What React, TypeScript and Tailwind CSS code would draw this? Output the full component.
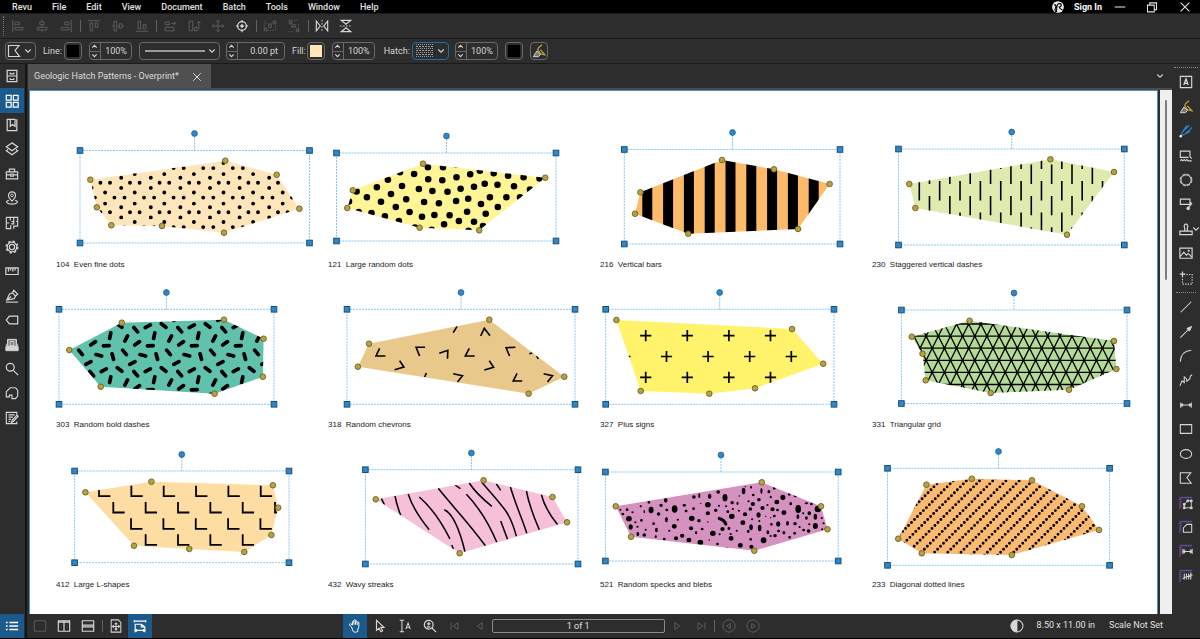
import { useId } from "react";
import type { ReactNode } from "react";

type Pt = [number, number];

/* ------------------------------------------------------------------ */
/* Icons, all on a 16 x 16 grid                                        */
/* ------------------------------------------------------------------ */

const icons: Record<string, ReactNode> = {
  // arrange toolbar
  alignLeft: <path d="M2 1v14M4.500 3.500h5v3h-5zM4.500 9.500h9v3h-9z" />,
  alignCenter: <path d="M8 1v2.500M8 6.500v3M8 12.500v2.500M5.500 3.500h5v3h-5zM2.500 9.500h11v3h-11z" />,
  alignRight: <path d="M14 1v14M6.500 3.500h5v3h-5zM2.500 9.500h9v3h-9z" />,
  alignTop: <path d="M1 2h14M3.500 4.500h3v9h-3zM9.500 4.500h3v5h-3z" />,
  alignMiddle: <path d="M1 8h2.500M6.500 8h3M12.500 8h2.500M3.500 2.500h3v11h-3zM9.500 5.500h3v5h-3z" />,
  alignBottom: <path d="M1 14h14M3.500 2.500h3v9h-3zM9.500 6.500h3v5h-3z" />,
  sameWidth: <path d="M2.500 9.500h10v4h-10zM2.500 3.500h5v3h-5zM9.500 5h5M12.500 3l2 2-2 2" />,
  sameHeight: <path d="M2.500 2.500h4v11h-4zM8.500 9.500h3v4h-3zM13.500 12V3M11.500 5l2-2 2 2" />,
  move: <path d="M8 1.500v13M1.500 8h13M6 3.500l2-2 2 2M6 12.500l2 2 2-2M3.500 6l-2 2 2 2M12.500 6l2 2-2 2" />,
  target: (
    <>
      <circle cx="8" cy="8" r="5" strokeWidth="1.500" />
      <circle cx="8" cy="8" r="1.500" fill="currentColor" />
      <path d="M8 1v3M8 12v3M1 8h3M12 8h3" strokeWidth="1.300" />
    </>
  ),
  distH: (
    <>
      <path d="M1.500 2v12M14.500 2v12" strokeDasharray="1.500 1.500" />
      <path d="M5 13h8M3 5h7" strokeDasharray="1.500 1.500" />
      <path d="M11.500 2.500h3v3h-3zM6.500 6.500h3v3h-3zM1.500 10.500h3v3h-3z" />
    </>
  ),
  distV: (
    <>
      <path d="M2 1.500h12M13 6v8M5 5v6M2 14.500h6" strokeDasharray="1.500 1.500" />
      <path d="M2.500 2.500h3v3h-3zM6.500 6.500h3v3h-3zM10.500 11.500h3v3h-3z" />
    </>
  ),
  flipH: (
    <>
      <path d="M8 1v14" strokeDasharray="2 1.500" />
      <path d="M1.500 2.500v11l4.500-5.500zM14.500 2.500v11l-4.500-5.500z" strokeWidth="1.300" />
    </>
  ),
  flipV: (
    <>
      <path d="M1 8h14" strokeDasharray="2 1.500" />
      <path d="M2.500 1.500h11l-5.500 4.500zM2.500 14.500h11l-5.500-4.500z" strokeWidth="1.300" />
    </>
  ),
  // panels
  cabinet: <path d="M2.500 1.500h11v13h-11zM2.500 8h11M6 4v1.500h4V4M6 10.500V12h4v-1.500" strokeWidth="1.400" />,
  grid: <path d="M1.500 1.500h5.500v5.500h-5.500zM9.500 1.500h5.500v5.500h-5.500zM1.500 9.500h5.500v5.500h-5.500zM9.500 9.500h5.500v5.500h-5.500z" strokeWidth="1.400" />,
  bookmark: <path d="M6 1.500H2.500v13h11v-13M6 1.500h5.500v8L8.700 7.500 6 9.500z" strokeWidth="1.400" />,
  layers: <path d="M8 1l6.500 4.500L8 10 1.500 5.500zM3.500 8.500l-2 1.500L8 14.500l6.500-4.500-2-1.500" strokeWidth="1.400" />,
  toolbox: <path d="M1.500 5.500h13v8h-13zM1.500 9h5M9.500 9h5M6.500 8h3v2.500h-3zM5 5.500v-3h6v3" strokeWidth="1.300" />,
  pin: (
    <>
      <path d="M8 11.500C5 8.500 4 7 4 5a4 4 0 0 1 8 0c0 2-1 3.500-4 6.500z" strokeWidth="1.300" />
      <path d="M4.500 10.500C-.500 12 2 15 8 15s8.500-3 3.500-4.500" strokeWidth="1.300" />
      <circle cx="8" cy="5" r="1.500" />
    </>
  ),
  floor: <path d="M1.500 1.500h13v10H10v3M1.500 1.500v13h5v-4M6 1.500V5M1.500 8H5M10 1.500v5H7.500M10 6.500V9H7M14.500 6h-2" strokeWidth="1.300" />,
  gear: (
    <>
      <circle cx="8" cy="8" r="5.500" strokeWidth="1.400" />
      <circle cx="8" cy="8" r="3" strokeWidth="1.300" />
      <circle cx="8" cy="8" r="6.700" strokeWidth="1.500" strokeDasharray="2.600 2.660" />
    </>
  ),
  ruler: <path d="M1 4.500h14v7.500H1zM4 4.500v4M6.500 4.500v3M9 4.500v4M11.500 4.500v3" strokeWidth="1.400" />,
  signature: (
    <>
      <path d="M1 15h14" strokeWidth="1.300" />
      <path d="M2 12.500l3-6.500 3.500-1.500 3.500 3.500-1.500 3zM8.500 4.500l1.500-3 4.500 4.500-2.500 2M2 12.500l5-4" strokeWidth="1.300" />
    </>
  ),
  tag: <path d="M5 3.500h9.500v9H5L1.500 8z" strokeWidth="1.400" />,
  studio: (
    <>
      <path d="M3 1.500h10v8H3z" />
      <path d="M1 10h14v4.500H1z" fill="currentColor" />
      <path d="M3 2h10v7.500H3z" fill="currentColor" fillOpacity=".5" />
      <path d="M6 4h4v4.500H6z" />
      <path d="M1.500 6.500V14M14.500 6.500V14" />
    </>
  ),
  search: (
    <>
      <circle cx="6" cy="6" r="4.500" strokeWidth="1.400" />
      <path d="M9.500 9.500l5.500 5.500" strokeWidth="1.400" />
    </>
  ),
  shape: <path d="M1.500 6.500L6 2h6l2.500 3v6.500L12 14.500H8v-4H5v2H1.500z" strokeWidth="1.300" />,
  notes: <path d="M13.500 4v-2.500h-12v13h12V12M4 4.500h7M4 7h5M4 9.500h3M4 12h2M15 6l-5.500 6-2 1 .700-2.300 5.500-6z" strokeWidth="1.300" />,
  // markup tools
  text: (
    <>
      <path d="M1.500 1.500h13v13h-13z" strokeWidth="1.300" />
      <path d="M5.500 11.500L8 4.500l2.500 7M6.500 9.500h3" strokeWidth="1.500" />
    </>
  ),
  highlighter: (
    <>
      <path d="M11.500 1C9 2.500 7 4 6.500 6.500l3 4.500 5.500 1.500-5.500-6" stroke="#b89b35" strokeWidth="1.500" />
      <path d="M5.500 8l-4 6.500h6l2-2.500z" fill="#777" stroke="#e4e4e4" />
    </>
  ),
  pen: (
    <>
      <path d="M12 1.500L4 9l-2 4.500L7 11.500 15 4M9 1.500L4 9M7 11.500l6-3" stroke="#2f80c2" strokeWidth="1.400" />
      <circle cx="2" cy="14" r="1.400" fill="#fff" stroke="none" />
    </>
  ),
  typewriter: <path d="M12.500 8V2.500h-11v7H11M1.500 13.500l1.500-1.500 1.500 1.500L6 12l1.500 1.500L9 12l1.500 1.500h4M12 8l2.500 3" strokeWidth="1.300" />,
  cloud: (
    <>
      <circle cx="8" cy="8" r="5.800" strokeWidth="1.100" />
      <circle cx="8" cy="8" r="6.700" strokeWidth="1.100" strokeDasharray="3.800 1.460" />
    </>
  ),
  callout: (
    <>
      <path d="M1.500 2.500h11v6h-11zM12.500 5.500l2 2-4 5" strokeWidth="1.300" />
      <circle cx="10.500" cy="13" r="1.600" fill="currentColor" />
    </>
  ),
  stamp: <path d="M1 14.500h14v-4H1zM6.500 10.500V7C3.500 1 12.500 1 9.500 7v3.500" strokeWidth="1.400" />,
  image: (
    <>
      <path d="M1 2.500h14v11.500H1zM1.500 12l4-5 3 3.500 2-2 4 4" strokeWidth="1.300" />
      <circle cx="11" cy="5.500" r=".8" fill="currentColor" />
    </>
  ),
  crop: (
    <>
      <path d="M4 6v9h11V4H6" strokeDasharray="1.500 1.500" strokeWidth="1.200" />
      <path d="M4 .500v6M1 3.500h6" strokeWidth="1.300" />
    </>
  ),
  line: <path d="M2 14L14 2" strokeWidth="1.200" />,
  arrow: (
    <>
      <path d="M1.500 14.500L12 4" strokeWidth="1.200" />
      <path d="M14.500 1.500L9 4l3 3z" fill="currentColor" />
    </>
  ),
  arc: <path d="M1.500 14.500C2 6 6 2 14 1.500" strokeWidth="1.200" />,
  polyline: <path d="M1 14.500L3.500 9l2.500 2V4.500l2.500 2L9 9.500l3.500-3 .5-3 2-1.500" strokeWidth="1.200" />,
  dimension: <path d="M2 5v6M14 5v6M2 8h12M4.500 6.500L2 8l2.500 1.500M11.500 6.500L14 8l-2.500 1.500" strokeWidth="1.300" />,
  rect: <path d="M1.500 3h13v10h-13z" strokeWidth="1.200" />,
  ellipse: <ellipse cx="8" cy="8" rx="6.500" ry="5" strokeWidth="1.200" />,
  polygon: <path d="M1.500 2h12L9 7.500l5 6.500H1.500z" strokeWidth="1.200" />,
  measPoly: (
    <>
      <path d="M1 15V1.500h14M3.500 1v2M6 1v2M8.500 1v2M11 1v2M13.500 1v2M1 4h2M1 6.500h2M1 9h2M1 11.500h2" stroke="#7450ae" />
      <path d="M6 13.500V9.500l4-4h4v8z" />
      <path d="M5 12.500h2v2H5zM5 8.500h2v2H5zM9 4.500h2v2H9zM13 4.500h2v2h-2zM13 12.500h2v2h-2z" fill="currentColor" />
    </>
  ),
  measArea: (
    <>
      <path d="M1 15V1.500h14M3.500 1v2M6 1v2M8.500 1v2M11 1v2M13.500 1v2M1 4h2M1 6.500h2M1 9h2M1 11.500h2" stroke="#7450ae" />
      <path d="M5 14V9l4-4h5.500v9z" strokeWidth="1.200" />
    </>
  ),
  measLen: (
    <>
      <path d="M1 15V1.500h14M3.500 1v2M6 1v2M8.500 1v2M11 1v2M13.500 1v2M1 4h2M1 6.500h2M1 9h2M1 11.500h2" stroke="#7450ae" />
      <path d="M4.500 5.500v6M15 5.500v6M5 8.500h10M7 6.500l-2 2 2 2M12.500 6.500l2 2-2 2" strokeWidth="1.200" />
    </>
  ),
  measCount: (
    <>
      <path d="M1 15V1.500h14M3.500 1v2M6 1v2M8.500 1v2M11 1v2M13.500 1v2M1 4h2M1 6.500h2M1 9h2M1 11.500h2" stroke="#7450ae" />
      <path d="M6 5v7M8.500 5v7M11 5v7M13.500 4v8M4 10.500L15.500 6.500" strokeWidth="1.200" />
    </>
  ),
  // status bar
  list: <path d="M1 4h2M5 4h10M1 8h2M5 8h10M1 12h2M5 12h10" strokeWidth="1.800" />,
  paneOne: <path d="M1.500 2h13v12h-13z" />,
  paneTwo: <path d="M1.500 2h13v12h-13zM8 2v12M1.500 3.500h13" strokeWidth="1.300" />,
  paneRows: <path d="M1.500 2h13v12h-13zM1.500 7h13M1.500 9h13" strokeWidth="1.300" />,
  fitPage: <path d="M2.500 1h8l3 3v11h-11zM8 4.500v8M4 8.500h8M6.500 6L8 4.500 9.500 6M6.500 11L8 12.500 9.500 11M5.500 7L4 8.500 5.500 10M10.500 7L12 8.500 10.500 10" strokeWidth="1.200" />,
  fitWidth: <path d="M1.500 1v3M14.500 1v3M1.500 2.500h13M2.500 15V6h7l4 3v6M9.500 6v3h4M1.500 13h13M4.500 11.500L3 13l1.500 1.500M11.500 11.500L13 13l-1.500 1.500" strokeWidth="1.300" />,
  hand: <path d="M4 9L2 7c-1-1.500 1-2 2-1l1 1V3c.5-1 1.500-1 1.800 0V1.500c.5-1 1.500-1 1.800 0V3c.5-1 1.500-1 1.800 0v1c.6-1 1.700-1 1.900 0 .5 3 0 6-1 7.500V14c-2 1.500-4.500 1.500-5.500 0zM6.800 3v3.500M8.600 3v3.500M10.500 4v3" strokeWidth="1.100" />,
  pointer: <path d="M4 1.500v11.500l3-2.500 2 4 2-1-2-4h3.500z" strokeWidth="1.300" />,
  selectText: <path d="M2 1.500h5M4.500 1.500v13M2 14.500h5M9 11.500l2.500-7 2.500 7M10 9.500h3" strokeWidth="1.200" />,
  zoom: (
    <>
      <circle cx="6.500" cy="6.500" r="5" strokeWidth="1.400" />
      <path d="M10 10l5 5M4.500 5.500h4M6.500 3.500v4M4.500 9h4" strokeWidth="1.300" />
    </>
  ),
  first: <path d="M3.500 4v8M11.500 4v8L6 8z" />,
  prev: <path d="M10.500 4v8L5 8z" />,
  next: <path d="M5.500 4v8L11 8z" />,
  last: <path d="M12.500 4v8M4.500 4v8L10 8z" />,
  prevView: (
    <>
      <circle cx="8" cy="8" r="7" />
      <path d="M9.500 5v6L5.500 8z" />
    </>
  ),
  nextView: (
    <>
      <circle cx="8" cy="8" r="7" />
      <path d="M6.500 5v6l4-3z" />
    </>
  ),
  contrast: (
    <>
      <circle cx="8" cy="8" r="6.800" strokeWidth="1.200" />
      <path d="M8 1.200a6.800 6.800 0 0 0 0 13.600z" fill="currentColor" />
    </>
  ),
  close: <path d="M3 3l10 10M13 3L3 13" strokeWidth="1.300" />,
  minimize: <path d="M1 8h14" strokeWidth="1.400" />,
  restore: <path d="M2 5.500h9v9H2zM5 5.500V2.500h9v9h-3" strokeWidth="1.400" />,
  chevron: <path d="M2.500 5l5.500 5.500L13.500 5" strokeWidth="2.200" />,
  chevronUp: <path d="M3 10.500l5-5 5 5" strokeWidth="2.600" />,
  chevronDown: <path d="M3 5.500l5 5 5-5" strokeWidth="2.600" />,
};

function Icon({ name, className = "size-3.5" }: { name: string; className?: string }) {
  return (
    <svg viewBox="0 0 16 16" fill="none" stroke="currentColor" className={`${className} shrink-0`} aria-hidden="true">
      {icons[name]}
    </svg>
  );
}

function Tool({
  name,
  label,
  active = false,
  disabled = false,
}: {
  name: string;
  label: string;
  active?: boolean;
  disabled?: boolean;
}) {
  const tone = active ? "bg-[#1b5a8a] text-white" : disabled ? "text-[#626262]" : "text-[#d6d6d6]";
  return (
    <button
      type="button"
      aria-label={label}
      aria-pressed={active}
      disabled={disabled}
      className={`flex h-full min-h-6 w-6 shrink-0 items-center justify-center ${tone}`}
    >
      <Icon name={name} />
    </button>
  );
}

function Separator() {
  return (
    <div className="flex w-1 shrink-0 justify-center">
      <div className="h-3 w-px bg-[#626262]" />
    </div>
  );
}

/* ------------------------------------------------------------------ */
/* Menu bar and property toolbars                                      */
/* ------------------------------------------------------------------ */

const menus = ["Revu", "File", "Edit", "View", "Document", "Batch", "Tools", "Window", "Help"];

function MenuBar() {
  return (
    <header className="flex h-[13px] items-center bg-black pt-px text-[9px] leading-3 font-medium text-[#e2e2e2]">
      <nav className="flex gap-5 pl-3">
        {menus.map((m) => (
          <button key={m} type="button">
            {m}
          </button>
        ))}
      </nav>
      <div className="ml-auto flex items-center pr-2">
        <svg viewBox="0 0 16 16" className="mr-2.5 size-3" aria-hidden="true">
          <circle cx="8" cy="8" r="7.800" fill="#eee" />
          <path d="M2.500 5.500C5 4 6 7 4.500 9.500S4 13 5.500 15M6 14.500C6.500 10 5.500 3 10.500 3.500c3 .5 2.500 4.500-1 4.500 1 2.500 2.500 3.500 4.500 4" fill="none" stroke="#000" strokeWidth="1.500" />
        </svg>
        <button type="button" className="mr-3 font-bold text-white">
          Sign In
        </button>
        <button type="button" aria-label="Minimize" className="mr-5">
          <Icon name="minimize" className="size-3" />
        </button>
        <button type="button" aria-label="Restore" className="mr-5">
          <Icon name="restore" className="size-3" />
        </button>
        <button type="button" aria-label="Close window">
          <Icon name="close" className="size-3.5" />
        </button>
      </div>
    </header>
  );
}

function ArrangeBar() {
  return (
    <div role="toolbar" aria-label="Arrange" className="flex h-[25px] items-center border-t border-[#1a1a1a] pl-[3px]">
      <div className="mr-0.5 h-5 border-l border-dotted border-[#777]" />
      <Tool name="alignLeft" label="Align left" disabled />
      <Tool name="alignCenter" label="Align center" disabled />
      <Tool name="alignRight" label="Align right" disabled />
      <Separator />
      <Tool name="alignTop" label="Align top" disabled />
      <Tool name="alignMiddle" label="Align middle" disabled />
      <Tool name="alignBottom" label="Align bottom" disabled />
      <Separator />
      <Tool name="sameWidth" label="Same width" disabled />
      <Tool name="sameHeight" label="Same height" disabled />
      <Tool name="move" label="Same size" disabled />
      <Tool name="target" label="Center on page" />
      <Separator />
      <Tool name="distH" label="Distribute horizontally" disabled />
      <Tool name="distV" label="Distribute vertically" disabled />
      <Separator />
      <Tool name="flipH" label="Flip horizontal" />
      <Tool name="flipV" label="Flip vertical" />
    </div>
  );
}

function Spinner({ id, label, value, wide = false }: { id: string; label: string; value: string; wide?: boolean }) {
  return (
    <div
      className={`flex h-[18px] overflow-hidden rounded-sm border border-[#6a6a6a] ${wide ? "w-[59px]" : "w-[43px]"}`}
    >
      <div className="flex w-[11px] shrink-0 flex-col border-r border-[#6a6a6a]">
        <button type="button" aria-label={`Increase ${label}`} className="flex flex-1 items-center justify-center border-b border-[#6a6a6a]">
          <Icon name="chevronUp" className="size-[7px]" />
        </button>
        <button type="button" aria-label={`Decrease ${label}`} className="flex flex-1 items-center justify-center">
          <Icon name="chevronDown" className="size-[7px]" />
        </button>
      </div>
      <input
        id={id}
        aria-label={label}
        defaultValue={value}
        className={`w-full min-w-0 bg-transparent pt-px text-right outline-none ${wide ? "pr-1.5" : "pr-1"}`}
      />
    </div>
  );
}

function Swatch({ label, color }: { label: string; color: string }) {
  return (
    <button
      type="button"
      aria-label={label}
      className="flex size-[18px] items-center justify-center rounded-sm border border-[#6a6a6a]"
    >
      <span className={`size-3 ${color}`} />
    </button>
  );
}

function Picker({
  label,
  options,
  width,
  active = false,
  children,
}: {
  label: string;
  options: string[];
  width: string;
  active?: boolean;
  children: ReactNode;
}) {
  return (
    <div className={`relative h-[18px] rounded-sm border ${active ? "border-[#1f6ea5]" : "border-[#6a6a6a]"} ${width}`}>
      <select aria-label={label} className="h-full w-full appearance-none bg-transparent text-transparent outline-none">
        {options.map((o) => (
          <option key={o}>{o}</option>
        ))}
      </select>
      <span className="pointer-events-none absolute inset-0 flex items-center justify-between px-[3px]">
        {children}
        <Icon name="chevron" className="size-2" />
      </span>
    </div>
  );
}

function PropertyBar() {
  return (
    <div
      role="toolbar"
      aria-label="Properties"
      className="flex h-[26px] items-center border-y border-[#1a1a1a] pl-[5px] text-[9px] text-[#d6d6d6]"
    >
      <Picker label="Tool preset" options={["Polygon"]} width="w-[31px]">
        <svg viewBox="0 0 14 14" className="-ml-0.5 size-3.5" fill="none" stroke="currentColor" strokeWidth="1.200">
          <path d="M1.500 1.500H12L8 6.500l4.500 6h-11z" />
        </svg>
      </Picker>
      <label htmlFor="line-opacity" className="mr-0.5 ml-[7px] pt-px">
        Line:
      </label>
      <Swatch label="Line colour" color="bg-black" />
      <div className="mx-[7px]">
        <Spinner id="line-opacity" label="Line opacity" value="100%" />
      </div>
      <Picker label="Line style" options={["Solid"]} width="w-[81px]">
        <span className="ml-0.5 h-0.5 w-[60px] bg-[#9a9a9a]" />
      </Picker>
      <div className="mr-[7px] ml-1.5">
        <Spinner id="line-width" label="Line width" value="0.00 pt" wide />
      </div>
      <label htmlFor="fill-opacity" className="mr-px pt-px">
        Fill:
      </label>
      <Swatch label="Fill colour" color="bg-[#ffe6ba]" />
      <div className="mr-[9px] ml-[7px]">
        <Spinner id="fill-opacity" label="Fill opacity" value="100%" />
      </div>
      <label htmlFor="hatch-opacity" className="mr-0.5 pt-px">
        Hatch:
      </label>
      <Picker label="Hatch pattern" options={["Even fine dots"]} width="w-[37px]" active>
        <svg viewBox="0 0 18 14" className="h-3.5 w-[18px]" stroke="#9a9a9a">
          {[0.5, 2.5, 4.5, 6.5, 8.5, 10.5, 12.5].map((y, i) => (
            <path key={y} d={`M0 ${y}h18`} strokeDasharray={i % 2 ? "2 1" : "1 1"} />
          ))}
        </svg>
      </Picker>
      <div className="mr-[7px] ml-1.5">
        <Spinner id="hatch-opacity" label="Hatch opacity" value="100%" />
      </div>
      <Swatch label="Hatch colour" color="bg-black" />
      <button
        type="button"
        aria-label="Highlight"
        className="ml-[7px] flex size-[18px] items-center justify-center rounded-sm border border-[#6a6a6a]"
      >
        <Icon name="highlighter" />
      </button>
    </div>
  );
}

/* ------------------------------------------------------------------ */
/* Hatches                                                             */
/* ------------------------------------------------------------------ */

const range = (n: number) => Array.from({ length: n }, (_, i) => i);
const dot = (x: number, y: number, r: number) => `M${x - r} ${y}a${r} ${r} 0 1 0 ${2 * r} 0a${r} ${r} 0 1 0 ${-2 * r} 0`;

const fineCell: Pt[] = [
  [15.2, 0], [25.3, 0], [5.9, 6], [22, 9.6], [1.2, 14.7], [10.8, 14.7], [22, 19.8], [5.9, 24.4],
];
const fineDots = range(9)
  .flatMap((i) => range(4).flatMap((j) => fineCell.map(([x, y]) => dot(69.6 + i * 29.6 + x, 138.6 + j * 29.5 + y, 1.95))))
  .join("");

const largeDotPts: Pt[] = [
  [427.9, 167.3], [443, 167.3], [414.1, 174], [428.2, 179.3], [442.3, 180.3], [400, 172.3], [387.9, 179.7],
  [402, 186], [376.9, 187.3], [366.9, 197.3], [391, 194], [418.9, 189], [432.4, 191], [447.5, 191.7],
  [456.5, 177.3], [470.2, 174.3], [479.9, 170.7], [493.7, 173.3], [508.1, 175.7], [523.6, 177.3], [539.5, 178.5],
  [460.6, 188.7], [474, 186.7], [484.7, 183.7], [497.5, 184.7], [514, 186.3], [530, 189.5], [356.6, 191.5],
  [381, 201.7], [406.2, 199.3], [395.8, 207], [409.6, 212], [424.1, 202], [438.9, 203.3], [456.1, 201],
  [468.2, 198.7], [489.9, 197.3], [506.4, 197.3], [497.8, 207], [520, 197.3], [481, 204], [485.7, 213.7],
  [467.1, 211.7], [449.6, 215.3], [434.4, 215], [422, 216.7], [444.1, 224.3], [458.9, 221], [474, 221.8],
  [371.5, 213], [384.9, 216.3], [398.9, 221], [358.6, 212], [349, 201.5], [431.7, 229.8], [468.5, 230.8],
  [415, 227.5], [483, 226], [456, 164.5],
];
const largeDots = largeDotPts.map(([x, y]) => dot(x, y, 3.3)).join("");

const stagger = range(20)
  .flatMap((i) => range(4).map((j) => `M${919.3 + i * 10.18} ${(i % 2 ? 164.6 : 149.8) + j * 31.3}v19.3`))
  .join("");

const boldCell: [number, number, number][] = [
  [7.5, 4.7, 50], [19.6, 1.3, -28], [35.4, 0.5, 38], [26, 10.7, -78], [42, 13.5, -62], [8.9, 18.3, -35],
  [22.1, 20.8, -3], [14.6, 30.3, 15], [28.6, 31.6, 75], [40.3, 27.4, 50], [4.2, 38, -27],
];
const boldDashes = range(6)
  .flatMap((i) =>
    range(3).flatMap((j) =>
      boldCell.map(([x, y, a]) => {
        const dx = 2.9 * Math.cos((a * Math.PI) / 180);
        const dy = 2.9 * Math.sin((a * Math.PI) / 180);
        return `M${40.2 + i * 44 + x - dx} ${325 + (j - 1) * 44 + y - dy}l${2 * dx} ${2 * dy}`;
      }),
    ),
  )
  .join("");

const chevrons =
  "M379.600 348.300l-3.600 7.700h9.400M425 347.300h-8.900l3.500 8.700M439.300 353.300l8.500-3-.3 8.400M469.300 348.300l-4 7.700h9.400M399.600 360.700l4.300 6.300-9.300 2.700M480.700 336l3.600-7.700 5.700 7.400M515.400 347.300l-9.300.4 3.500 8.300M489.300 360.700l4.300 6.600-9.300 2.700M453.200 373.700l9.300 2-5 6.300M543.600 373.700l8.900 2-5 6.300M517.100 373.300l-3.900 7.700h9M457.100 326.300l-3.900 6.400M426.400 373l-1.800 4M529.300 353.700l3-.7M536.800 356l1.400 3";

const pluses = range(3)
  .flatMap((r) => range(5).map((c) => `M${640.1 + c * 41.6 - (r === 1 ? 20.8 : 0)} ${335.7 + r * 20.8}h11.200m-5.600 -5.600v11.200`))
  .join("");

const triangles =
  range(8).map((i) => `M900 ${324 + i * 12.1}h230`).join("") +
  range(34).map((i) => `M${816.7 + i * 12.16} 311.900l60.800 121M${877.5 + i * 12.16} 311.900l-60.800 121`).join("");

const ells = range(4)
  .flatMap((r) => range(8).map((c) => `M${[99, 113.3, 98.7, 113.3][r] + c * 32.35 - 32.35} ${[485.7, 502, 518.3, 534.3][r]}v10.500h11.400`))
  .join("");

const waves =
  "M381.400 498.700l3 6M395 496q2 10 5.700 19.300M408.200 494q5 16 21 35.700M419.300 497q17 14.700 30.700 42M451.800 545l1.500 4M444.300 509.700q11.800 5.300 20.700 42M438.200 488.300c16 20 26.800 30 47.200 57.400M466.400 494.300q18.200 19 30.400 48M455 485l5.400 3.700M469.300 483q6.400 10.300 22.500 23.300M481.800 482.300c22.500 26 27.800 29.300 34.600 54M496.400 484l4.300 6.300M500.700 521l6.800 18.300M510.400 487c6.400 21.300 11.800 31.300 16.400 46.300M526.400 491q2.900 15.700 12.900 38.700M541.400 494.700q4 15.300 16.100 29.700";

const speckPts: number[][] = [
  [109, 701, 8, 8], [85, 674, 3, 3], [92, 687, 4, 4], [104, 674, 4, 4], [114, 726, 6, 8], [127, 712, 3, 3],
  [119, 682, 3, 3], [144, 706, 4, 4], [152, 680, 2, 5], [142, 664, 3, 3], [171, 675, 7, 10], [165, 652, 4, 4],
  [156, 734, 3, 3], [134, 747, 4, 6], [152, 750, 5, 5], [133, 725, 3, 3], [178, 716, 4, 4], [186, 735, 4, 7],
  [199, 661, 5, 5], [192, 687, 5, 5], [212, 646, 5, 7], [184, 755, 3, 4], [208, 762, 4, 4], [214, 704, 4, 8],
  [215, 675, 4, 4], [237, 672, 8, 11], [236, 724, 7, 7], [222, 737, 3, 3], [241, 760, 6, 6], [258, 752, 6, 6],
  [246, 704, 3, 3], [285, 700, 8, 8], [269, 678, 4, 4], [264, 661, 5, 4], [283, 730, 6, 6], [277, 765, 7, 7],
  [309, 772, 8, 8], [305, 707, 5, 5], [314, 732, 4, 4], [297, 743, 3, 5], [291, 636, 5, 5], [306, 632, 3, 7],
  [290, 671, 4, 4], [335, 634, 5, 8], [330, 659, 8, 8], [330, 685, 6, 6], [330, 711, 2, 2], [344, 745, 8, 8],
  [334, 765, 2, 2], [310, 655, 2, 2], [359, 621, 5, 5], [378, 638, 7, 11], [361, 662, 3, 3], [352, 676, 5, 5],
  [397, 694, 8, 8], [386, 680, 4, 4], [381, 664, 3, 3], [398, 653, 5, 5], [400, 672, 3, 3], [371, 732, 6, 6],
  [389, 730, 4, 5], [363, 748, 3, 3], [394, 747, 3, 3], [395, 760, 7, 7], [357, 777, 4, 4], [383, 788, 2, 2],
  [421, 781, 7, 7], [411, 737, 3, 3], [428, 713, 7, 7], [434, 688, 6, 6], [417, 677, 3, 3], [413, 655, 3, 5],
  [418, 633, 2, 2], [430, 618, 5, 10], [451, 607, 3, 4], [457, 630, 4, 4], [444, 649, 3, 3], [456, 657, 6, 6],
  [449, 672, 5, 5], [443, 739, 4, 5], [451, 727, 5, 9], [454, 703, 3, 3], [450, 763, 4, 4], [452, 785, 6, 6],
  [435, 605, 2, 2], [480, 618, 3, 9], [473, 644, 5, 5], [472, 690, 6, 8], [483, 669, 6, 6], [474, 708, 3, 3],
  [475, 729, 5, 10], [486, 766, 8, 9], [498, 742, 4, 6], [492, 694, 2, 2], [506, 698, 2, 2], [497, 660, 3, 3],
  [506, 636, 3, 4], [501, 620, 4, 5], [516, 610, 4, 4], [511, 673, 6, 6], [516, 693, 4, 4], [527, 717, 6, 8],
  [508, 718, 4, 4], [528, 738, 4, 4], [506, 753, 3, 3], [518, 752, 5, 5], [540, 637, 7, 8], [523, 651, 7, 7],
  [525, 675, 4, 4], [543, 683, 7, 7], [553, 715, 4, 7], [543, 743, 4, 5], [559, 757, 4, 4], [573, 745, 4, 4],
  [574, 716, 5, 5], [562, 656, 4, 5], [558, 628, 4, 4], [575, 632, 5, 5], [583, 672, 8, 12], [582, 695, 4, 7],
  [597, 685, 3, 3], [606, 655, 5, 3], [599, 637, 4, 4], [606, 699, 4, 5], [614, 685, 5, 6], [614, 718, 3, 3],
  [631, 723, 7, 9], [612, 738, 5, 5], [620, 657, 4, 4], [638, 672, 9, 10], [631, 695, 5, 9], [649, 699, 3, 3],
  [654, 715, 3, 3], [587, 726, 3, 3], [598, 735, 4, 4], [650, 733, 3, 3],
];
const specks = speckPts
  .map(([x, y, a, b]) => {
    const rx = a / 2.8;
    const ry = b / 3;
    return `M${590 + x / 2.8 - rx} ${285 + y / 3}a${rx} ${ry} 0 1 0 ${2 * rx} 0a${rx} ${ry} 0 1 0 ${-2 * rx} 0`;
  })
  .join("");

const diagonals = range(32).map((i) => `M${798 + i * 13.2} 570l100 -100`).join("");

/* ------------------------------------------------------------------ */
/* Swatch sheet                                                        */
/* ------------------------------------------------------------------ */

interface Sample {
  code: string;
  name: string;
  view: string;
  fill: string;
  points: Pt[];
  box: [number, number, number, number];
  knob: Pt;
  hatch: ReactNode;
}

const samples: Sample[] = [
  {
    code: "104", name: "Even fine dots", view: "56 110 272 148", fill: "#ffe6ba",
    points: [[90.3, 179.7], [225.3, 160.7], [276.7, 174.7], [299.4, 208.7], [224, 232.7], [162, 226], [111.3, 225.3], [96.8, 207.3]],
    box: [80, 150.5, 309.5, 243], knob: [194.5, 133.5],
    hatch: <path d={fineDots} />,
  },
  {
    code: "121", name: "Large random dots", view: "328 110 272 148", fill: "#fff596",
    points: [[352.8, 190.3], [423, 163.7], [545.3, 177.7], [479.2, 230.3], [419.6, 227.7], [347.3, 208]],
    box: [336.5, 153, 556, 241], knob: [446.5, 136],
    hatch: <path d={largeDots} />,
  },
  {
    code: "216", name: "Vertical bars", view: "600 110 272 148", fill: "#fdba69",
    points: [[640.4, 192.3], [722, 160], [774, 169.3], [829.6, 184], [798, 229], [688.2, 233.7], [635, 213.7]],
    box: [624.3, 149.5, 840, 244], knob: [732.5, 132.5],
    hatch: <path d={range(9).map((i) => `M${642.3 + i * 20.8} 150h10v100h-10z`).join("")} />,
  },
  {
    code: "230", name: "Staggered vertical dashes", view: "872 110 272 148", fill: "#dfebae",
    points: [[909.3, 184], [1050.4, 159.3], [1114, 172], [1067, 234.7], [915.4, 208]],
    box: [898.5, 149, 1124.3, 245], knob: [1011.7, 132],
    hatch: <path d={stagger} fill="none" stroke="#000" strokeWidth="1.600" />,
  },
  {
    code: "303", name: "Random bold dashes", view: "56 270 272 148", fill: "#60c1ad",
    points: [[69.3, 350], [121.8, 322.7], [224, 319.7], [263.6, 338.7], [262.9, 376.7], [214.6, 393.7], [100.7, 386.7]],
    box: [59, 309.3, 274, 404.3], knob: [166.4, 292.5],
    hatch: <path d={boldDashes} fill="none" stroke="#000" strokeWidth="3.700" strokeLinecap="round" />,
  },
  {
    code: "318", name: "Random chevrons", view: "328 270 272 148", fill: "#e9c88b",
    points: [[369, 343.7], [489.3, 319.7], [564.3, 376.7], [528.6, 393.7], [357.9, 366.7]],
    box: [347, 309.3, 575, 404.3], knob: [461, 292.5],
    hatch: <path d={chevrons} fill="none" stroke="#000" strokeWidth="1.600" />,
  },
  {
    code: "327", name: "Plus signs", view: "600 270 272 148", fill: "#fff36c",
    points: [[616.4, 320], [792.1, 329], [823.2, 363.7], [755, 388.3], [709.3, 393.7], [640.7, 391]],
    box: [605.7, 309.3, 834, 404.3], knob: [719.7, 292.5],
    hatch: <path d={pluses} fill="none" stroke="#000" strokeWidth="1.700" />,
  },
  {
    code: "331", name: "Triangular grid", view: "872 270 272 148", fill: "#b5da98",
    points: [[911.8, 336.7], [969.6, 320.7], [1114, 341], [1116.4, 369], [1069, 389.7], [990.7, 393], [925.7, 380.3], [922.5, 353.7]],
    box: [901.4, 310, 1127, 403.5], knob: [1014, 293],
    hatch: <path d={triangles} fill="none" stroke="#000" strokeWidth="1.300" />,
  },
  {
    code: "412", name: "Large L-shapes", view: "56 430 272 148", fill: "#fedda2",
    points: [[85.4, 492.3], [151.4, 481.7], [272.9, 485.3], [278.2, 507.7], [271.4, 535], [244.3, 552], [189.3, 549], [134, 545.7]],
    box: [74.6, 471, 289, 562.7], knob: [181.8, 454.5],
    hatch: <path d={ells} fill="none" stroke="#000" strokeWidth="1.800" />,
  },
  {
    code: "432", name: "Wavy streaks", view: "328 430 272 148", fill: "#f6c0d9",
    points: [[375.7, 499.3], [483.6, 480.3], [552.5, 497], [567, 522.3], [459.6, 553.3]],
    box: [365.4, 469.7, 578, 564], knob: [471.4, 453],
    hatch: <path d={waves} fill="none" stroke="#000" strokeWidth="1.500" />,
  },
  {
    code: "521", name: "Random specks and blebs", view: "600 430 272 148", fill: "#d591bf",
    points: [[615.7, 506.3], [761.8, 482.3], [821, 506.3], [827.5, 529.3], [754.3, 550.7], [631, 536.7]],
    box: [605.4, 472, 838.2, 561], knob: [721, 455],
    hatch: (
      <>
        <path d={specks} />
        <path d="M719.300 518.500q5 1.500 6.500 5.500" fill="none" stroke="#000" strokeWidth="3.200" strokeLinecap="round" />
      </>
    ),
  },
  {
    code: "233", name: "Diagonal dotted lines", view: "872 430 272 148", fill: "#fcba71",
    points: [[926.4, 484.7], [971.8, 478.7], [1032, 480.3], [1082, 506.3], [1099, 530], [1011.8, 555], [921.8, 553.3], [898.2, 538.7]],
    box: [887.5, 468.3, 1109.6, 565.3], knob: [998.5, 451.5],
    hatch: <path d={diagonals} fill="none" stroke="#000" strokeWidth="2.900" strokeLinecap="round" strokeDasharray="0 4.200" />,
  },
];

function HatchSample({ code, name, view, fill, points, box, knob, hatch }: Sample) {
  const clip = useId();
  const outline = points.map((p) => p.join(",")).join(" ");
  const [x1, y1, x2, y2] = box;
  const corners: Pt[] = [[x1, y1], [x2, y1], [x2, y2], [x1, y2]];
  return (
    <figure>
      <svg viewBox={view} preserveAspectRatio="xMinYMin meet" className="h-[148px] w-full overflow-visible" role="img" aria-label={name}>
        <clipPath id={clip}>
          <polygon points={outline} />
        </clipPath>
        <polygon points={outline} fill={fill} />
        <g clipPath={`url(#${clip})`}>{hatch}</g>
        <path
          d={`M${x1} ${y1}H${x2}V${y2}H${x1}ZM${knob[0]} ${knob[1]}V${y1}`}
          fill="none"
          stroke="#8ac8f2"
          strokeDasharray="2 1"
        />
        {corners.map(([x, y]) => (
          <rect key={`${x} ${y}`} x={x - 2.8} y={y - 2.8} width="5.600" height="5.600" fill="#2f87cb" stroke="#1b4f79" />
        ))}
        <circle cx={knob[0]} cy={knob[1]} r="2.900" fill="#2f87cb" stroke="#1b5f95" strokeWidth=".8" />
        {points.map(([x, y]) => (
          <circle key={`${x} ${y}`} cx={x} cy={y} r="2.800" fill="#b8a344" stroke="#6b5f22" strokeWidth=".9" />
        ))}
      </svg>
      <figcaption className="h-3 text-[8px] leading-[13px] whitespace-pre text-[#222]">{`${code}  ${name}`}</figcaption>
    </figure>
  );
}

/* ------------------------------------------------------------------ */
/* Shell                                                               */
/* ------------------------------------------------------------------ */

const panels: [string, string][] = [
  ["cabinet", "File Access"], ["grid", "Thumbnails"], ["bookmark", "Bookmarks"], ["layers", "Layers"],
  ["toolbox", "Tool Chest"], ["pin", "Places"], ["floor", "Spaces"], ["gear", "Properties"],
  ["ruler", "Measurements"], ["signature", "Signatures"], ["tag", "Flags"], ["studio", "Studio"],
  ["search", "Search"], ["shape", "3D Model"], ["notes", "Forms"],
];

const markupTools: [string, string][] = [
  ["text", "Text Box"], ["highlighter", "Highlight"], ["pen", "Pen"], ["typewriter", "Note"], ["cloud", "Cloud"],
  ["callout", "Callout"], ["stamp", "Stamp"], ["image", "Image"], ["crop", "Snapshot"],
];

const shapeTools: [string, string][] = [
  ["line", "Line"], ["arrow", "Arrow"], ["arc", "Arc"], ["polyline", "Polyline"], ["dimension", "Dimension"],
  ["rect", "Rectangle"], ["ellipse", "Ellipse"], ["polygon", "Polygon"], ["measPoly", "Perimeter"],
  ["measArea", "Area"], ["measLen", "Length"], ["measCount", "Count"],
];

function StatusBar() {
  return (
    <footer className="flex h-[25px] items-center border-b border-black text-[9px] text-[#e0e0e0]">
      <Tool name="list" label="Markups list" active />
      <div className="mx-px h-full w-0.5 bg-[#161616]" />
      <Tool name="paneOne" label="Single pane" disabled />
      <Tool name="paneTwo" label="Split vertical" />
      <Tool name="paneRows" label="Split horizontal" />
      <Separator />
      <Tool name="fitPage" label="Fit page" />
      <Tool name="fitWidth" label="Fit width" active />
      <div className="flex-[190]" />
      <div className="flex h-full gap-px">
        <Tool name="hand" label="Pan" active />
        <Tool name="pointer" label="Select" />
        <Tool name="selectText" label="Select text" />
        <Tool name="zoom" label="Zoom" />
        <Tool name="first" label="First page" disabled />
        <Tool name="prev" label="Previous page" disabled />
      </div>
      <input
        aria-label="Page"
        defaultValue="1 of 1"
        className="h-3.5 w-[173px] rounded-xs border border-[#8a8a8a] bg-transparent text-center outline-none"
      />
      <Tool name="next" label="Next page" disabled />
      <Tool name="last" label="Last page" disabled />
      <Separator />
      <Tool name="prevView" label="Previous view" disabled />
      <Tool name="nextView" label="Next view" disabled />
      <div className="flex-[239]" />
      <Tool name="contrast" label="Dimmer" />
      <span className="ml-2">8.50 x 11.00 in</span>
      <span className="mr-[37px] ml-3.5">Scale Not Set</span>
    </footer>
  );
}

export default function App() {
  return (
    <div className="flex min-h-screen flex-col bg-[#2d2d2d] font-['Roboto',sans-serif]">
      <MenuBar />
      <ArrangeBar />
      <PropertyBar />
      <div className="flex flex-1">
        <aside className="w-[25px] shrink-0" aria-label="Panels">
          <div className="grid h-[366px] auto-rows-fr">
            {panels.map(([icon, label]) => (
              <Tool key={icon} name={icon} label={label} active={icon === "grid"} />
            ))}
          </div>
        </aside>
        <div className="mr-px w-0.5 shrink-0 bg-[#161616]" />
        <main className="flex min-w-0 flex-1 flex-col">
          <div className="flex h-[26px] items-center justify-between border-b-2 border-[#4b4b4b]">
            <div className="flex h-full w-[183px] items-center justify-between bg-[#505050] pt-0.5 pr-2 pl-1.5 text-[9px] text-[#dcdcdc]">
              <span className="whitespace-nowrap">Geologic Hatch Patterns - Overprint*</span>
              <button type="button" aria-label="Close tab">
                <Icon name="close" className="size-3" />
              </button>
            </div>
            <button type="button" aria-label="Open documents" className="mr-2 text-[#d0d0d0]">
              <Icon name="chevron" className="size-2" />
            </button>
          </div>
          <div className="flex flex-1">
            <section className="mr-0.5 ml-px grid flex-1 grid-cols-4 content-start border border-b-0 border-[#4a92c6] bg-white pt-[19px] pr-[13px] pl-[26px] font-['Liberation_Sans',Arial,sans-serif]">
              {samples.map((s) => (
                <HatchSample key={s.code} {...s} />
              ))}
            </section>
            <div className="w-3 shrink-0 bg-[#efefef] px-[5px] pt-2.5">
              <div className="h-[180px] rounded-full bg-[#7d7d7d]" />
            </div>
          </div>
        </main>
        <aside className="flex w-7 shrink-0 flex-col items-center pt-[3px]" aria-label="Tools">
          <div className="w-6 border-t border-dotted border-[#8a8a8a]" />
          <div className="mt-0.5 grid h-[220px] auto-rows-fr">
            {markupTools.map(([icon, label]) => (
              <div key={icon} className="relative flex items-center">
                <Tool name={icon} label={label} />
                {icon === "stamp" && (
                  <span className="absolute left-[18px] text-[#d0d0d0]">
                    <Icon name="chevron" className="size-2" />
                  </span>
                )}
              </div>
            ))}
          </div>
          <div className="mt-0.5 w-5 border-t border-dotted border-[#8a8a8a]" />
          <div className="mt-0.5 grid h-[293px] auto-rows-fr">
            {shapeTools.map(([icon, label]) => (
              <Tool key={icon} name={icon} label={label} />
            ))}
          </div>
        </aside>
      </div>
      <StatusBar />
    </div>
  );
}
